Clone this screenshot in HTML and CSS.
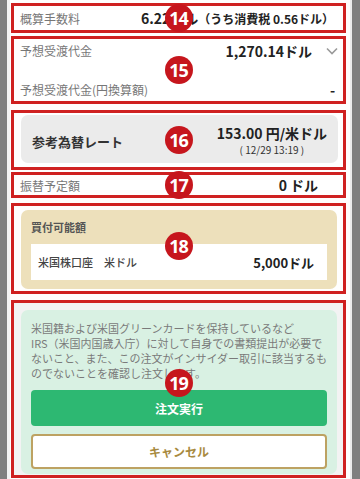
FILE: index.html
```html
<!DOCTYPE html>
<html lang="ja">
<head>
<meta charset="utf-8">
<title>注文確認</title>
<link rel="stylesheet" href="styles.css">
</head>
<body>
<div class="screen">
  <div class="rail rail-left"></div>
  <main class="content">
    <section class="anno sec-fee">
      <span class="label">概算手数料</span>
      <span class="value"><span class="fee-main">6.22ドル</span><span class="fee-sub">（うち消費税 0.56ドル）</span></span>
      <span class="badge">14</span>
    </section>

    <section class="anno sec-amount">
      <div class="row">
        <span class="label">予想受渡代金</span>
        <span class="value-wrap">
          <span class="value">1,270.14ドル</span>
          <svg class="chevron" width="12" height="8" viewBox="0 0 12 8"><path d="M1 1.5 L6 6.5 L11 1.5" fill="none" stroke="#9a9a9a" stroke-width="1.6"/></svg>
        </span>
      </div>
      <div class="row">
        <span class="label">予想受渡代金(円換算額)</span>
        <span class="value dash">-</span>
      </div>
      <span class="badge">15</span>
    </section>

    <section class="anno sec-rate">
      <div class="rate-box">
        <span class="rate-label">参考為替レート</span>
        <div class="rate-value">
          <div class="rate-main">153.00 円/米ドル</div>
          <div class="rate-date">( 12/29 13:19 )</div>
        </div>
      </div>
      <span class="badge">16</span>
    </section>

    <section class="anno sec-transfer">
      <span class="label">振替予定額</span>
      <span class="value">0 ドル</span>
      <span class="badge">17</span>
    </section>

    <section class="anno sec-buy">
      <div class="buy-box">
        <div class="buy-title">買付可能額</div>
        <div class="buy-row">
          <span class="buy-account">米国株口座　米ドル</span>
          <span class="buy-amount">5,000ドル</span>
        </div>
      </div>
      <span class="badge badge-buy">18</span>
    </section>

    <section class="anno sec-notice">
      <div class="notice-box">
        <p class="notice-text">
          <span class="line">米国籍および米国グリーンカードを保持しているなど</span>
          <span class="line">IRS（米国内国歳入庁）に対して自身での書類提出が必要で</span>
          <span class="line">ないこと、また、この注文がインサイダー取引に該当するも</span>
          <span class="line">のでないことを確認し注文します。</span>
        </p>
        <button class="btn btn-primary" type="button">注文実行</button>
        <button class="btn btn-cancel" type="button">キャンセル</button>
      </div>
      <span class="badge badge-notice">19</span>
    </section>
  </main>
  <div class="rail rail-right"></div>
</div>
</body>
</html>
```

FILE: styles.css
```css
* {
  box-sizing: border-box;
  margin: 0;
  padding: 0;
}

html,
body {
  width: 360px;
  height: 479px;
  overflow: hidden;
  background: #fff;
}

body {
  font-family: "Noto Sans CJK JP", "Noto Sans", sans-serif;
  color: #222;
}

.screen {
  display: flex;
  height: 479px;
}

.rail {
  flex: none;
  background: #7f7f7f;
}

.rail-left {
  width: 10px;
  border-right: 3px solid #f2f2f2;
}

.rail-right {
  width: 11px;
  border-left: 2px solid #ececec;
}

.content {
  flex: 1;
  display: flex;
  flex-direction: column;
  padding: 0 4px 0 1px;
}

.anno {
  position: relative;
  flex: none;
  border: 3px solid #cf2121;
}

.badge {
  position: absolute;
  left: 50%;
  top: 50%;
  width: 28px;
  height: 28px;
  margin: -14px 0 0 -14px;
  border-radius: 50%;
  background: #c6161d;
  color: #fff;
  font-family: "Noto Sans", sans-serif;
  font-weight: 700;
  font-size: 18px;
  line-height: 28px;
  letter-spacing: -1px;
  text-align: center;
  z-index: 2;
}

.badge-buy {
  margin-top: -17px;
}

.badge-notice {
  margin-top: -20px;
}

.label {
  font-size: 12px;
  color: #777;
}

.value {
  font-size: 14px;
  font-weight: 700;
  color: #222;
}

/* 14 */
.sec-fee {
  margin-top: 3px;
  height: 30px;
  display: flex;
  align-items: center;
  justify-content: space-between;
  padding: 0 9px 0 6px;
}

.fee-main {
  font-size: 14px;
}

.fee-sub {
  font-size: 12px;
}

/* 15 */
.sec-amount {
  margin-top: 3px;
  height: 68px;
  display: flex;
  flex-direction: column;
  gap: 22px;
  padding: 3px 5px 3px 6px;
}

.row {
  display: flex;
  align-items: center;
  justify-content: space-between;
  height: 17px;
}

.value-wrap {
  display: flex;
  align-items: center;
  gap: 14px;
}

.chevron {
  display: block;
}

.dash {
  padding-right: 3px;
}

/* 16 */
.sec-rate {
  margin-top: 6px;
  height: 60px;
  padding: 2px 5px 4px 7px;
}

.rate-box {
  height: 48px;
  background: #ebebeb;
  border-radius: 7px;
  display: flex;
  align-items: center;
  justify-content: space-between;
  padding: 4px 11px 0;
}

.rate-label {
  font-size: 13px;
  font-weight: 700;
  color: #333;
}

.rate-value {
  text-align: center;
}

.rate-main {
  font-size: 14px;
  font-weight: 700;
  line-height: 18px;
  color: #222;
}

.rate-date {
  font-size: 10px;
  line-height: 16px;
  color: #333;
}

/* 17 */
.sec-transfer {
  margin-top: 2px;
  height: 26px;
  display: flex;
  align-items: center;
  justify-content: space-between;
  padding: 0 25px 0 6px;
}

/* 18 */
.sec-buy {
  margin-top: 5px;
  height: 91px;
  padding: 4px 6px 2px 7px;
}

.buy-box {
  height: 79px;
  background: #ede0bb;
  border-radius: 7px;
  padding: 10px 10px 9px;
}

.buy-title {
  font-size: 11px;
  font-weight: 700;
  line-height: 14px;
  color: #555;
  margin-bottom: 10px;
}

.buy-row {
  height: 36px;
  background: #fff;
  display: flex;
  align-items: center;
  justify-content: space-between;
  padding: 0 13px 0 7px;
}

.buy-account {
  font-size: 11px;
  font-weight: 500;
  color: #444;
}

.buy-amount {
  font-size: 13px;
  font-weight: 700;
  color: #222;
}

/* 19 */
.sec-notice {
  margin-top: 6px;
  height: 178px;
  background: #f3f3f3;
  padding: 7px 6px 0 7px;
}

.notice-box {
  background: #d9f1e3;
  border-radius: 7px;
  padding: 11px 10px 5px;
}

.notice-text {
  font-size: 11px;
  line-height: 15px;
  color: #7a7a7a;
}

.line {
  display: block;
  white-space: nowrap;
}

.btn {
  display: flex;
  align-items: center;
  justify-content: center;
  width: 100%;
  border-radius: 4px;
  font-family: "Noto Sans CJK JP", "Noto Sans", sans-serif;
  font-size: 12px;
  font-weight: 700;
}

.btn-primary {
  height: 36px;
  margin-top: 9px;
  background: #2db872;
  color: #fff;
  border: none;
}

.btn-cancel {
  height: 35px;
  margin-top: 8px;
  background: #fff;
  color: #a88a40;
  border: 2px solid #bda262;
}
```
